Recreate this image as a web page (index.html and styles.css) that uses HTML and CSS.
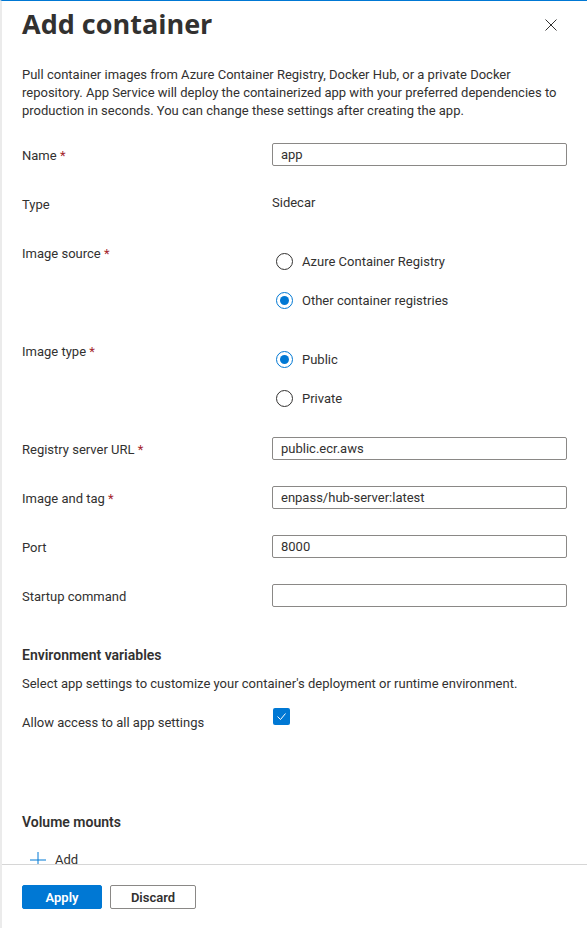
FILE: index.html
```html
<!DOCTYPE html>
<html lang="en">
<head>
    <meta charset="UTF-8">
    <meta name="viewport" content="width=device-width, initial-scale=1.0">
    <title>Add container</title>
    <link rel="stylesheet" href="styles.css">
</head>
<body>
    <div class="blade">
        <header class="blade-header">
            <h1>Add container</h1>
            <button class="close-button" title="Close">
                <svg width="12" height="12" viewBox="0 0 12 12">
                    <path d="M0.5 0.5 L11.5 11.5 M11.5 0.5 L0.5 11.5" stroke="#323130" stroke-width="1" fill="none"/>
                </svg>
            </button>
        </header>

        <div class="blade-content">
            <p class="intro">Pull container images from Azure Container Registry, Docker Hub, or a private Docker repository. App Service will deploy the containerized app with your preferred dependencies to production in seconds. You can change these settings after creating the app.</p>

            <div class="form-row">
                <label class="form-label">Name <span class="req">*</span></label>
                <div class="form-control"><input class="text-input" type="text" value="app"></div>
            </div>

            <div class="form-row">
                <label class="form-label">Type</label>
                <div class="form-control"><span class="static-value">Sidecar</span></div>
            </div>

            <div class="form-row">
                <label class="form-label">Image source <span class="req">*</span></label>
                <div class="form-control radio-group">
                    <div class="radio-item"><span class="radio"></span>Azure Container Registry</div>
                    <div class="radio-item"><span class="radio checked"></span>Other container registries</div>
                </div>
            </div>

            <div class="form-row">
                <label class="form-label">Image type <span class="req">*</span></label>
                <div class="form-control radio-group">
                    <div class="radio-item"><span class="radio checked"></span>Public</div>
                    <div class="radio-item"><span class="radio"></span>Private</div>
                </div>
            </div>

            <div class="form-row">
                <label class="form-label">Registry server URL <span class="req">*</span></label>
                <div class="form-control"><input class="text-input" type="text" value="public.ecr.aws"></div>
            </div>

            <div class="form-row">
                <label class="form-label">Image and tag <span class="req">*</span></label>
                <div class="form-control"><input class="text-input" type="text" value="enpass/hub-server:latest"></div>
            </div>

            <div class="form-row">
                <label class="form-label">Port</label>
                <div class="form-control"><input class="text-input" type="text" value="8000"></div>
            </div>

            <div class="form-row">
                <label class="form-label">Startup command</label>
                <div class="form-control"><input class="text-input" type="text" value=""></div>
            </div>

            <h2 class="section-title env">Environment variables</h2>
            <p class="section-desc">Select app settings to customize your container's deployment or runtime environment.</p>

            <div class="form-row check-row">
                <label class="form-label">Allow access to all app settings</label>
                <div class="form-control">
                    <span class="checkbox">
                        <svg width="17" height="17" viewBox="0 0 17 17">
                            <path d="M4.5 8.5 L7.5 11.5 L12.5 5.5" stroke="#fff" stroke-width="1" fill="none"/>
                        </svg>
                    </span>
                </div>
            </div>

            <h2 class="section-title volumes">Volume mounts</h2>
            <button class="add-button">
                <svg width="16" height="16" viewBox="0 0 16 16">
                    <path d="M8 0 V16 M0 8 H16" stroke="#0078d4" stroke-width="1" fill="none"/>
                </svg>
                Add
            </button>
        </div>

        <footer class="blade-footer">
            <button class="btn btn-primary">Apply</button>
            <button class="btn btn-default">Discard</button>
        </footer>
    </div>
</body>
</html>
```

FILE: styles.css
```css
* {
    box-sizing: border-box;
}
body {
    margin: 0;
    font-family: "Segoe UI", Roboto, "Noto Sans", sans-serif;
    font-size: 13px;
    color: #323130;
    background-color: #fff;
}
.blade {
    height: 100vh;
    display: flex;
    flex-direction: column;
    border-top: 1px solid #0078d4;
    border-left: 2px solid #ebebeb;
    overflow: hidden;
}
.blade-header {
    display: flex;
    justify-content: space-between;
    align-items: flex-start;
    padding: 7px 20px 0 20px;
}
.blade-header h1 {
    margin: 0;
    font-family: "Segoe UI", "Open Sans", sans-serif;
    font-size: 27px;
    line-height: 32px;
    font-weight: 700;
}
.close-button {
    width: 32px;
    height: 32px;
    margin-top: 1px;
    border: none;
    background: none;
    padding: 0;
    display: flex;
    align-items: center;
    justify-content: center;
    cursor: pointer;
}
.blade-content {
    flex: 1;
    overflow: hidden;
    padding: 25px 20px 0 20px;
}
.intro {
    margin: 0 0 23px 0;
    line-height: 18px;
}
.form-row {
    display: grid;
    grid-template-columns: 250px 1fr;
    min-height: 23px;
    margin-bottom: 26px;
}
.form-label {
    padding-top: 4px;
    line-height: 18px;
}
.req {
    color: #a4262c;
}
.text-input {
    width: 100%;
    height: 23px;
    border: 1px solid #8a8886;
    border-radius: 2px;
    padding: 0 8px;
    font-family: inherit;
    font-size: 13px;
    color: #323130;
    outline: none;
}
.static-value {
    display: block;
    padding-top: 2px;
    line-height: 18px;
}
.radio-group {
    display: flex;
    flex-direction: column;
    gap: 19px;
    padding: 10px 0 3px 4px;
}
.radio-item {
    display: flex;
    align-items: center;
    gap: 9px;
    height: 20px;
}
.radio {
    width: 17px;
    height: 17px;
    border: 1px solid #323130;
    border-radius: 50%;
    display: flex;
    align-items: center;
    justify-content: center;
}
.radio.checked {
    border-color: #0078d4;
}
.radio.checked::after {
    content: "";
    width: 9px;
    height: 9px;
    border-radius: 50%;
    background-color: #0078d4;
}
.section-title {
    margin: 0;
    font-size: 14px;
    font-weight: 600;
    line-height: 20px;
}
.section-title.env {
    margin-top: 38px;
}
.section-desc {
    margin: 10px 0 15px 0;
    line-height: 18px;
}
.check-row .form-label {
    padding-top: 6px;
}
.checkbox {
    display: block;
    width: 17px;
    height: 17px;
    margin-left: 1px;
    border-radius: 2px;
    background-color: #0078d4;
}
.checkbox svg {
    display: block;
}
.section-title.volumes {
    margin-top: 80px;
}
.add-button {
    display: flex;
    align-items: center;
    gap: 9px;
    margin-top: 18px;
    padding: 0 0 0 8px;
    border: none;
    background: none;
    font-family: inherit;
    font-size: 13px;
    line-height: 20px;
    color: #323130;
}
.blade-footer {
    display: flex;
    gap: 8px;
    padding: 20px 20px 19px 20px;
    border-top: 1px solid #d6d6d6;
}
.btn {
    height: 24px;
    border-radius: 2px;
    font-family: inherit;
    font-size: 13px;
    font-weight: 600;
    cursor: pointer;
}
.btn-primary {
    width: 80px;
    border: 1px solid #0078d4;
    background-color: #0078d4;
    color: #fff;
}
.btn-default {
    width: 86px;
    border: 1px solid #8a8886;
    background-color: #fff;
    color: #323130;
}
```
